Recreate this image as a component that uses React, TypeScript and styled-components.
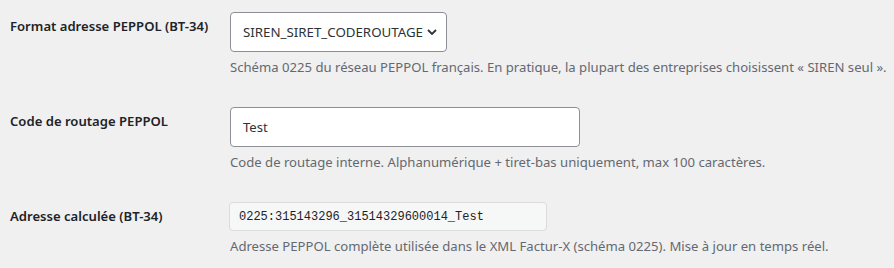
import React from "react";
import styled, { createGlobalStyle } from "styled-components";

const Global = createGlobalStyle`
  html, body { margin: 0; padding: 0; background: #f0f0f1; }
  body { font-family: "Noto Sans", "Open Sans", sans-serif; color: #3c434a; }
  * { box-sizing: border-box; }
`;

const Form = styled.div`
  display: flex;
  flex-direction: column;
  padding: 12px 10px 0 10px;
  gap: 30px;
`;

const Row = styled.div`
  display: grid;
  grid-template-columns: 220px 1fr;
  align-items: start;
`;

const Label = styled.label`
  font-size: 13.1px;
  font-weight: 600;
  line-height: 20px;
  color: #1d2327;
  padding-top: 4px;
`;

const Field = styled.div`
  display: flex;
  flex-direction: column;
  align-items: flex-start;
`;

const Description = styled.p`
  margin: 5px 0 0;
  font-size: 13.12px;
  line-height: 20px;
  color: #646970;
  white-space: nowrap;
`;

const SelectBox = styled.div`
  position: relative;
  width: 217px;
  height: 40px;
  border: 1px solid #8c8f94;
  border-radius: 4px;
  background: #fff;
  display: flex;
  align-items: center;
  padding: 0 22px 0 12px;
  font-size: 13.3px;
  color: #2c3338;
  overflow: hidden;
  white-space: nowrap;
`;

const Chevron = styled.svg`
  position: absolute;
  right: 8px;
  top: 50%;
  margin-top: -6px;
  width: 12px;
  height: 12px;
`;

const TextInput = styled.div<{ $width: number }>`
  width: ${(p) => p.$width}px;
  height: 40px;
  border: 1px solid #8c8f94;
  border-radius: 4px;
  background: #fff;
  display: flex;
  align-items: center;
  padding: 0 12px;
  font-size: 13.1px;
  color: #2c3338;
`;

const ReadonlyInput = styled.div`
  width: 318px;
  height: 29px;
  margin-left: -1px;
  border: 1px solid #dcdcde;
  border-radius: 4px;
  background: #f6f7f7;
  display: flex;
  align-items: center;
  padding: 0 9px;
  font-family: "Liberation Mono", "DejaVu Sans Mono", monospace;
  font-size: 12px;
  color: #1d2327;
`;

export default function App() {
  return (
    <>
      <Global />
      <Form>
        <Row>
          <Label>Format adresse PEPPOL (BT-34)</Label>
          <Field>
            <SelectBox>
              SIREN_SIRET_CODEROUTAGE
              <Chevron viewBox="0 0 12 12">
                <path d="M2 4 L6 8 L10 4" fill="none" stroke="#2c3338" strokeWidth="1.8" />
              </Chevron>
            </SelectBox>
            <Description>
              Schéma 0225 du réseau PEPPOL français. En pratique, la plupart des entreprises choisissent « SIREN seul ».
            </Description>
          </Field>
        </Row>
        <Row>
          <Label>Code de routage PEPPOL</Label>
          <Field>
            <TextInput $width={350}>Test</TextInput>
            <Description>
              Code de routage interne. Alphanumérique + tiret-bas uniquement, max 100 caractères.
            </Description>
          </Field>
        </Row>
        <Row>
          <Label>Adresse calculée (BT-34)</Label>
          <Field>
            <ReadonlyInput>0225:315143296_31514329600014_Test</ReadonlyInput>
            <Description>
              Adresse PEPPOL complète utilisée dans le XML Factur-X (schéma 0225). Mise à jour en temps réel.
            </Description>
          </Field>
        </Row>
      </Form>
    </>
  );
}
